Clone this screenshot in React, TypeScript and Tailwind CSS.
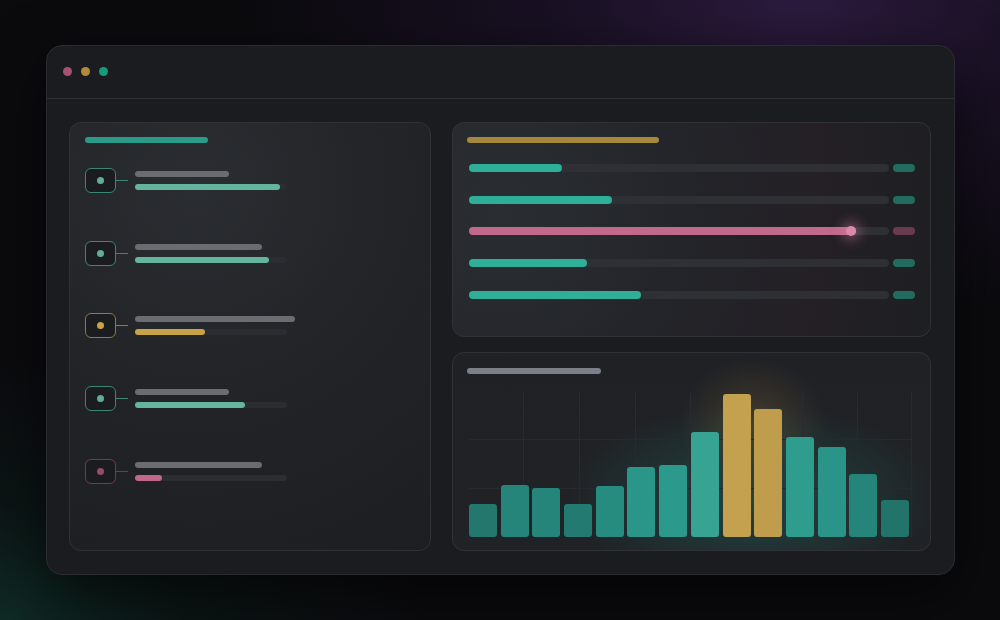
import React from "react";

type Tone = "teal" | "gold" | "pink";

const leftItems: { tone: Tone; label: number; fill: number }[] = [
  { tone: "teal", label: 94, fill: 145 },
  { tone: "teal", label: 127, fill: 134 },
  { tone: "gold", label: 160, fill: 70 },
  { tone: "teal", label: 94, fill: 110 },
  { tone: "pink", label: 127, fill: 27 },
];

const boxTone: Record<Tone, { box: string; dot: string; line: string; fill: string }> = {
  teal: { box: "border-[#3d8575]", dot: "bg-[#5fae98]", line: "bg-[#3d8575]", fill: "bg-[#63b59e]" },
  gold: { box: "border-[#94773a]", dot: "bg-[#c9a445]", line: "bg-[#94773a]", fill: "bg-[#c7a246]" },
  pink: { box: "border-[#76394f]", dot: "bg-[#9a4a69]", line: "bg-[#76394f]", fill: "bg-[#c0678a]" },
};

const rows: { fill: number; pink?: boolean }[] = [
  { fill: 93 },
  { fill: 143 },
  { fill: 387, pink: true },
  { fill: 118 },
  { fill: 172 },
];

const bars: { h: number; cls: string }[] = [
  { h: 33, cls: "bg-[#23776d]" },
  { h: 52, cls: "bg-[#26857a]" },
  { h: 49, cls: "bg-[#26857a]" },
  { h: 33, cls: "bg-[#237a70]" },
  { h: 51, cls: "bg-[#278c80]" },
  { h: 70, cls: "bg-[#2a968a]" },
  { h: 72, cls: "bg-[#2b9a8d]" },
  { h: 105, cls: "bg-[#36a393]" },
  { h: 143, cls: "bg-[#c3a14f]" },
  { h: 128, cls: "bg-[#bf9d4c]" },
  { h: 100, cls: "bg-[#2f9d8e]" },
  { h: 90, cls: "bg-[#2a9488]" },
  { h: 63, cls: "bg-[#25857a]" },
  { h: 37, cls: "bg-[#22746b]" },
];

function LeftPanel() {
  return (
    <div className="rounded-[12px] border border-[#303237] bg-[radial-gradient(circle_at_35%_15%,#2a2d31_0%,#222428_45%,#1d1e22_100%)] pl-[15px] pt-[14px]">
      <div className="h-[6px] w-[123px] rounded-full bg-[#2a9b88]" />
      <div className="mt-[25px] flex flex-col gap-[47.8px]">
        {leftItems.map((it, i) => {
          const t = boxTone[it.tone];
          return (
            <div key={i} className="flex h-[25px] items-center">
              <div className={`flex h-[25px] w-[31px] items-center justify-center rounded-[6px] border-[1.5px] bg-[#1b1c20] ${t.box}`}>
                <div className={`h-[7px] w-[7px] rounded-full ${t.dot}`} />
              </div>
              <div className={`h-px w-[12px] ${t.line}`} />
              <div className="ml-[7px] flex flex-col gap-[7px]">
                <div className="h-[6px] rounded-full bg-[#6a6c71]" style={{ width: it.label }} />
                <div className="h-[6px] w-[152px] rounded-full bg-[#2b2d32]">
                  <div className={`h-[6px] rounded-full ${t.fill}`} style={{ width: it.fill }} />
                </div>
              </div>
            </div>
          );
        })}
      </div>
    </div>
  );
}

function RowsPanel() {
  return (
    <div className="h-[215px] rounded-[12px] border border-[#303237] bg-[radial-gradient(circle_at_10%_40%,#2a2e33_0%,#23252a_40%,#231f25_75%,#1e1f23_100%)] pl-[14px] pr-[15px] pt-[14px]">
      <div className="h-[6px] w-[192px] rounded-full bg-[#a4883d]" />
      <div className="mt-[21px] flex flex-col gap-[23.75px] pl-[2px]">
        {rows.map((r, i) => (
          <div key={i} className="flex h-[8px] items-center gap-[4px]">
            <div className="relative h-[8px] w-[420px] rounded-full bg-[#2e3035]">
              <div
                className={`relative h-[8px] rounded-full ${r.pink ? "bg-[#c0698b]" : "bg-[#2fae9a]"}`}
                style={{ width: r.fill }}
              >
                {r.pink && (
                  <div className="absolute right-0 top-[-1px] h-[10px] w-[10px] rounded-full bg-[#d98aaa] shadow-[0_0_12px_5px_rgba(230,140,180,0.35)]" />
                )}
              </div>
            </div>
            <div className={`h-[8px] w-[22px] rounded-full ${r.pink ? "bg-[#6b3a4f]" : "bg-[#226b60]"}`} />
          </div>
        ))}
      </div>
    </div>
  );
}

function ChartPanel() {
  return (
    <div className="relative h-[199px] overflow-hidden rounded-[12px] border border-[#303237] bg-[linear-gradient(180deg,#202125_0%,#1f2226_100%)] pl-[14px] pt-[15px]">
      <div className="absolute left-[110px] top-[50px] h-[190px] w-[380px] rounded-full bg-[radial-gradient(ellipse_at_center,rgba(40,160,140,0.28)_0%,rgba(40,160,140,0.1)_45%,rgba(40,160,140,0)_70%)]" />
      <div className="absolute left-[225px] top-[5px] h-[130px] w-[150px] rounded-full bg-[radial-gradient(ellipse_at_center,rgba(200,160,70,0.2)_0%,rgba(200,160,70,0)_70%)]" />
      <div className="relative h-[6px] w-[134px] rounded-full bg-[#7b7f88]" />
      <div className="relative ml-[2px] mt-[18px] h-[145px] w-[443px]">
        <svg className="absolute inset-0" width="443" height="145" viewBox="0 0 443 145">
          {[55, 111, 167, 222, 277, 334, 389, 443].map((x) => (
            <line key={x} x1={x - 0.5} y1="0" x2={x - 0.5} y2="145" stroke="#282a2f" strokeWidth="1" />
          ))}
          {[47, 96].map((y) => (
            <line key={y} x1="0" y1={y + 0.5} x2="443" y2={y + 0.5} stroke="#26292d" strokeWidth="1" />
          ))}
        </svg>
        <div className="absolute inset-0 flex items-end gap-[3.7px]">
          {bars.map((b, i) => (
            <div key={i} className={`w-[28px] rounded-[3px] ${b.cls}`} style={{ height: b.h }} />
          ))}
        </div>
      </div>
    </div>
  );
}

export default function App() {
  return (
    <div className="h-[620px] w-[1000px] overflow-hidden bg-[#0b0b0e] bg-[radial-gradient(ellipse_560px_320px_at_800px_0px,#2c1b3e_0%,rgba(32,19,46,0.65)_45%,rgba(11,11,14,0)_100%),radial-gradient(ellipse_420px_260px_at_0px_620px,#0f2a24_0%,rgba(11,30,26,0.5)_45%,rgba(11,11,14,0)_100%)] pl-[46px] pt-[45px]">
      <div className="flex h-[530px] w-[909px] flex-col rounded-[16px] border border-[#2b2c31] bg-[#1b1c20] shadow-[0_20px_60px_rgba(0,0,0,0.6)]">
        <div className="flex h-[53px] items-center gap-[9px] border-b border-[#2e3035] pl-[16px]">
          <div className="h-[9px] w-[9px] rounded-full bg-[#a8516f]" />
          <div className="h-[9px] w-[9px] rounded-full bg-[#b38a3a]" />
          <div className="h-[9px] w-[9px] rounded-full bg-[#169a7c]" />
        </div>
        <div className="grid h-[476px] grid-cols-[362px_479px] gap-[21px] pb-[23px] pl-[22px] pr-[23px] pt-[23px]">
          <LeftPanel />
          <div className="flex flex-col gap-[15px]">
            <RowsPanel />
            <ChartPanel />
          </div>
        </div>
      </div>
    </div>
  );
}
